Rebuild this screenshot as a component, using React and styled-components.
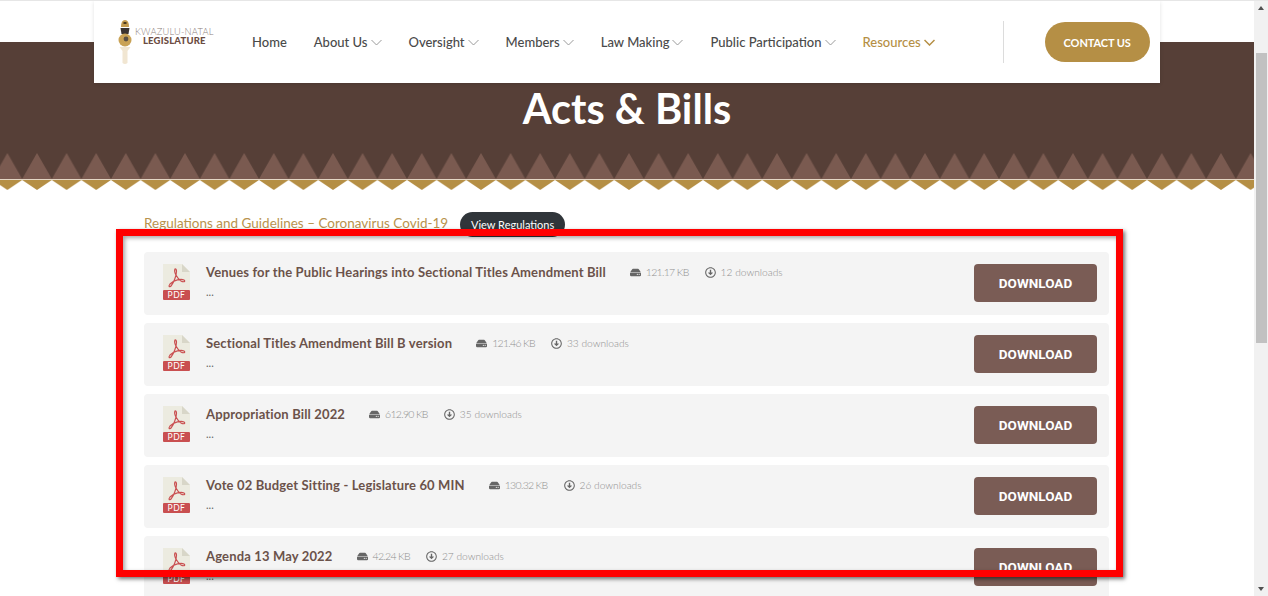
import React from "react";
import styled, { createGlobalStyle } from "styled-components";
import { FaHdd, FaRegArrowAltCircleDown } from "react-icons/fa";

const GlobalStyle = createGlobalStyle`
  html, body {
    margin: 0;
    padding: 0;
    height: 596px;
    overflow: hidden;
    background: #fff;
    font-family: "Lato", "Open Sans", sans-serif;
  }
`;

const Shell = styled.div`
  display: flex;
  height: 596px;
  overflow: hidden;
  position: relative;
  border-top: 1px solid #e6e6e6;
  box-sizing: border-box;
`;

const Page = styled.div`
  flex: 1;
  min-width: 0;
  position: relative;
`;

const TopStrip = styled.div`
  height: 41px;
  background: #fff;
`;

const NavCard = styled.header`
  position: absolute;
  top: 0;
  left: 94px;
  width: 1066px;
  height: 82px;
  box-sizing: border-box;
  background: #fff;
  display: flex;
  align-items: center;
  padding: 0 10px 0 24px;
  box-shadow: 0 1px 4px rgba(0, 0, 0, 0.12);
  z-index: 2;
`;

const Logo = styled.div`
  display: flex;
  align-items: flex-start;
  width: 95px;
  margin-right: 39px;
  flex: none;
`;

const LogoText = styled.div`
  display: flex;
  flex-direction: column;
  align-items: center;
  margin: 8px 0 0 3px;
  line-height: 9px;
`;

const LogoTop = styled.span`
  font-size: 9.3px;
  font-weight: 300;
  color: #8d807b;
  letter-spacing: 0.2px;
  white-space: nowrap;
`;

const LogoBottom = styled.span`
  font-size: 9.5px;
  font-weight: 900;
  color: #6b4c42;
  letter-spacing: 0.2px;
  white-space: nowrap;
`;

const Menu = styled.nav`
  display: flex;
  align-items: center;
  gap: 27px;
  flex: none;
`;

const MenuItem = styled.a`
  display: flex;
  align-items: center;
  gap: 3px;
  font-size: 13px;
  font-weight: 500;
  white-space: nowrap;
  color: ${(p) => (p.$active ? "#b58f45" : "#4a4a4a")};
`;

const Divider = styled.div`
  width: 1px;
  height: 42px;
  background: #dcdcdc;
  margin-left: 68px;
  margin-right: 41px;
  flex: none;
`;

const ContactButton = styled.a`
  width: 105px;
  height: 40px;
  flex: none;
  border-radius: 20px;
  background: #b58f45;
  color: #fff;
  font-size: 11px;
  font-weight: 700;
  letter-spacing: -0.1px;
  display: flex;
  align-items: center;
  justify-content: center;
`;

const Hero = styled.section`
  background: #563f37;
  height: 111px;
  display: flex;
  align-items: flex-end;
  justify-content: center;
`;

const HeroTitle = styled.h1`
  margin: 0 0 21px;
  font-size: 41.5px;
  line-height: 48px;
  font-weight: 700;
  color: #fff;
`;

const ZigzagSvg = styled.svg`
  display: block;
  width: 100%;
  height: 38px;
`;

const Content = styled.main`
  margin: 21px 145px 0 144px;
`;

const RegulationLine = styled.div`
  display: flex;
  align-items: center;
  gap: 12px;
  height: 25px;
  margin-bottom: 15px;
`;

const RegulationText = styled.span`
  font-size: 13.5px;
  color: #b8934d;
  margin-bottom: 3px;
`;

const RegulationButton = styled.a`
  width: 105px;
  height: 25px;
  border-radius: 13px;
  background: #30353a;
  color: #fff;
  font-size: 11px;
  display: flex;
  align-items: center;
  justify-content: center;
`;

const List = styled.div`
  display: flex;
  flex-direction: column;
  gap: 8px;
`;

const Row = styled.article`
  height: 63px;
  flex: none;
  display: flex;
  align-items: flex-start;
  background: #f4f4f4;
  border-radius: 4px;
  padding: 12px 12px 0 18px;
  box-sizing: border-box;
`;

const RowBody = styled.div`
  flex: 1;
  min-width: 0;
  margin-left: 16px;
`;

const TitleLine = styled.div`
  display: flex;
  align-items: center;
  height: 16px;
`;

const RowTitle = styled.h3`
  margin: 0 24px 0 0;
  font-size: 13px;
  font-weight: 700;
  letter-spacing: 0.15px;
  color: #6b524a;
  white-space: nowrap;
`;

const Meta = styled.span`
  display: flex;
  align-items: center;
  gap: 5px;
  margin-right: 16px;
  font-size: ${(p) => (p.$tight ? "10.5px" : "10.2px")};
  font-weight: 300;
  letter-spacing: ${(p) => (p.$tight ? "-0.7px" : "0")};
  color: #8f8f8f;
  white-space: nowrap;
  & svg {
    color: #666;
    font-size: 11px;
    flex: none;
  }
`;

const Dots = styled.div`
  margin-top: 4px;
  font-size: 11px;
  line-height: 16px;
  color: #666;
`;

const DownloadButton = styled.a`
  width: 123px;
  height: 38px;
  flex: none;
  box-sizing: border-box;
  padding-bottom: 1px;
  background: #7a5c55;
  border-radius: 4px;
  color: #fff;
  font-family: "Roboto", sans-serif;
  font-size: 13.5px;
  font-weight: 700;
  display: flex;
  align-items: center;
  justify-content: center;
`;

const Scrollbar = styled.div`
  width: 14px;
  flex: none;
  background: #f1f1f1;
  position: relative;
  display: flex;
  flex-direction: column;
  align-items: center;
  justify-content: space-between;
  padding: 5px 0 5px;
  box-sizing: border-box;
`;

const ScrollThumb = styled.div`
  position: absolute;
  top: 52px;
  left: 2px;
  width: 11px;
  height: 290px;
  background: #c1c1c1;
`;

const ScrollArrow = styled.div`
  width: 0;
  height: 0;
  border-left: 3.5px solid transparent;
  border-right: 3.5px solid transparent;
  ${(p) =>
    p.$down
      ? "border-top: 4px solid #505050;"
      : "border-bottom: 4px solid #505050;"}
`;

// the red marker drawn over the screenshot
const Highlight = styled.div`
  position: absolute;
  left: 116px;
  top: 228px;
  width: 1007px;
  height: 348px;
  box-sizing: border-box;
  border: 7px solid #ff0000;
  box-shadow: 2px 2px 4px rgba(0, 0, 0, 0.55),
    inset 2px 2px 4px rgba(0, 0, 0, 0.35);
  z-index: 3;
  pointer-events: none;
`;

const Chevron = ({ color = "#9a9a9a", width = 1 }) => (
  <svg width="11" height="7" viewBox="0 0 11 7" fill="none">
    <path d="M0.5 1 L5.5 6 L10.5 1" stroke={color} strokeWidth={width} />
  </svg>
);

const LogoMark = () => (
  <svg width="14" height="46" viewBox="0 0 14 46" style={{ flex: "none" }}>
    <path d="M3 8 Q3 1 7 1 Q11 1 11 8 Z" fill="#c39a4e" />
    <rect x="5.5" y="3" width="3" height="2" fill="#4a3a20" />
    <path d="M2.5 9 H11.5 L10.5 15 H3.5 Z" fill="#3a3330" />
    <circle cx="7" cy="21" r="6.5" fill="#c9a255" />
    <circle cx="8" cy="20" r="2.4" fill="#5a5046" />
    <path d="M1.5 28 H12.5 L9.5 32 V44 Q7 46 4.5 44 V32 Z" fill="#f1e6d2" />
  </svg>
);

const PdfIcon = () => (
  <svg width="28" height="36" viewBox="0 0 28 36" style={{ flex: "none" }}>
    <path d="M1 0 H20 L28 8 V26 H1 Z" fill="#ecebe0" />
    <path d="M20 0 L28 8 H20 Z" fill="#d8d6c8" />
    <rect x="1" y="26" width="27" height="10" rx="1" fill="#c94f50" />
    <path
      d="M13 5 C11.5 8 15 14 19 17 C21.5 18.5 24 17.5 22 16 C19 14.5 12 16 8 20 C6 22.5 7.5 23.5 9 22 C11.5 19 14.5 12 14.5 7 C14.5 5 13.5 4.5 13 5 Z"
      fill="none"
      stroke="#c94f50"
      strokeWidth="1.2"
    />
    <text
      x="14.5"
      y="34"
      textAnchor="middle"
      fontFamily="Lato, sans-serif"
      fontSize="8.5"
      letterSpacing="0.5"
      fill="#fff"
    >
      PDF
    </text>
  </svg>
);

const Zigzag = () => (
  <ZigzagSvg>
    <defs>
      <pattern
        id="zigzag"
        x="-7.4"
        y="0"
        width="29.6"
        height="38"
        patternUnits="userSpaceOnUse"
      >
        <rect width="29.6" height="26" fill="#563f37" />
        <path d="M0 26 L14.8 0 L29.6 26 Z" fill="#7a5a50" />
        <rect y="26" width="29.6" height="1" fill="#e4d6c4" />
        <path d="M0 27 H29.6 L14.8 37 Z" fill="#b58f45" />
      </pattern>
    </defs>
    <rect width="100%" height="38" fill="url(#zigzag)" />
  </ZigzagSvg>
);

const navItems = [
  { label: "Home" },
  { label: "About Us", sub: true },
  { label: "Oversight", sub: true },
  { label: "Members", sub: true },
  { label: "Law Making", sub: true },
  { label: "Public Participation", sub: true },
  { label: "Resources", sub: true, active: true },
];

const docs = [
  { title: "Venues for the Public Hearings into Sectional Titles Amendment Bill", size: "121.17 KB", count: 12 },
  { title: "Sectional Titles Amendment Bill B version", size: "121.46 KB", count: 33 },
  { title: "Appropriation Bill 2022", size: "612.90 KB", count: 35 },
  { title: "Vote 02 Budget Sitting - Legislature 60 MIN", size: "130.32 KB", count: 26 },
  { title: "Agenda 13 May 2022", size: "42.24 KB", count: 27 },
];

const App = () => (
  <>
    <GlobalStyle />
    <Shell>
      <Page>
        <NavCard>
          <Logo>
            <LogoMark />
            <LogoText>
              <LogoTop>KWAZULU-NATAL</LogoTop>
              <LogoBottom>LEGISLATURE</LogoBottom>
            </LogoText>
          </Logo>
          <Menu>
            {navItems.map((item) => (
              <MenuItem key={item.label} $active={item.active}>
                {item.label}
                {item.sub && (
                  <Chevron
                    color={item.active ? "#b58f45" : "#9a9a9a"}
                    width={item.active ? 1.5 : 1}
                  />
                )}
              </MenuItem>
            ))}
          </Menu>
          <Divider />
          <ContactButton>CONTACT US</ContactButton>
        </NavCard>
        <TopStrip />
        <Hero>
          <HeroTitle>Acts &amp; Bills</HeroTitle>
        </Hero>
        <Zigzag />
        <Content>
          <RegulationLine>
            <RegulationText>
              Regulations and Guidelines – Coronavirus Covid-19
            </RegulationText>
            <RegulationButton>View Regulations</RegulationButton>
          </RegulationLine>
          <List>
            {docs.map((doc) => (
              <Row key={doc.title}>
                <PdfIcon />
                <RowBody>
                  <TitleLine>
                    <RowTitle>{doc.title}</RowTitle>
                    <Meta $tight>
                      <FaHdd />
                      {doc.size}
                    </Meta>
                    <Meta>
                      <FaRegArrowAltCircleDown />
                      {doc.count} downloads
                    </Meta>
                  </TitleLine>
                  <Dots>...</Dots>
                </RowBody>
                <DownloadButton>DOWNLOAD</DownloadButton>
              </Row>
            ))}
          </List>
        </Content>
      </Page>
      <Scrollbar>
        <ScrollArrow />
        <ScrollThumb />
        <ScrollArrow $down />
      </Scrollbar>
      <Highlight />
    </Shell>
  </>
);

export default App;
